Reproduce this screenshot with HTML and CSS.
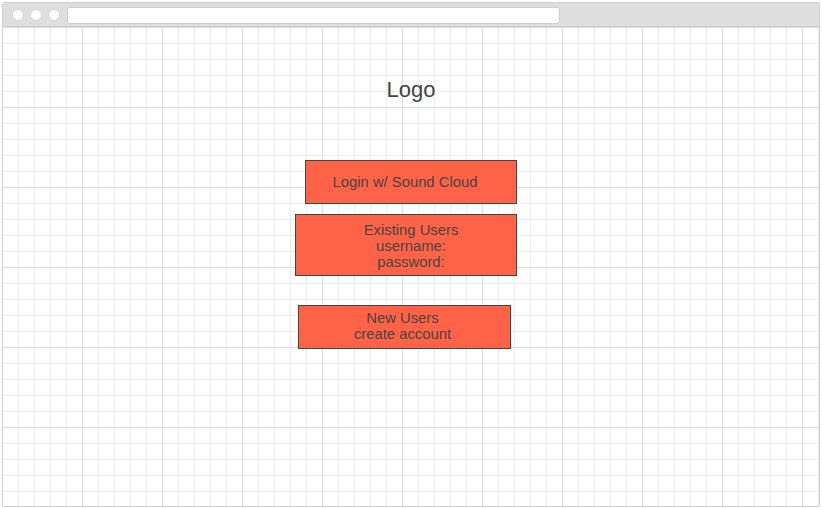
FILE: index.html
```html
<!DOCTYPE html>
<html>
<head>
<meta charset="utf-8">
<link rel="stylesheet" href="styles.css">
</head>
<body>
<div class="window">
  <div class="toolbar">
    <div class="dots">
      <span class="dot"></span><span class="dot"></span><span class="dot"></span>
    </div>
    <div class="url"></div>
  </div>
  <div class="canvas">
    <div class="logo">Logo</div>
    <div class="box box-login">Login w/ Sound Cloud</div>
    <div class="box box-existing">Existing Users<br>username:<br>password:</div>
    <div class="box box-new">New Users<br>create account</div>
  </div>
</div>
</body>
</html>
```
FILE: styles.css
```css
html, body {
  margin: 0;
  padding: 0;
  background: #ffffff;
}
body {
  padding: 2px;
  font-family: "Liberation Sans", Arial, sans-serif;
}
.window {
  width: 818px;
  height: 505px;
  box-sizing: border-box;
  border: 1px solid #cfcfcf;
  border-radius: 2px;
  display: flex;
  flex-direction: column;
  overflow: hidden;
}
.toolbar {
  height: 24px;
  box-sizing: border-box;
  background: #dedede;
  border-bottom: 1px solid #cdcdcd;
  display: flex;
  align-items: center;
  flex: none;
}
.dots {
  display: flex;
  gap: 6px;
  margin-left: 9px;
}
.dot {
  width: 12px;
  height: 12px;
  box-sizing: border-box;
  border-radius: 50%;
  background: #ffffff;
  border: 1px solid #d4d4d4;
}
.url {
  width: 493px;
  height: 17px;
  box-sizing: border-box;
  margin-left: 7px;
  margin-top: 1px;
  background: #ffffff;
  border: 1px solid #cccccc;
  border-radius: 3px;
}
.canvas {
  flex: 1;
  display: flex;
  flex-direction: column;
  background-color: #ffffff;
  background-image:
    linear-gradient(to right, #dcdcdc 1px, transparent 1px),
    linear-gradient(to bottom, #dcdcdc 1px, transparent 1px),
    linear-gradient(to right, #ececec 1px, transparent 1px),
    linear-gradient(to bottom, #ececec 1px, transparent 1px);
  background-size: 80px 80px, 80px 80px, 16px 16px, 16px 16px;
  background-position: -1px 0, -1px 0, -1px 0, -1px 0;
}
.logo {
  margin-top: 50px;
  height: 26px;
  line-height: 26px;
  text-align: center;
  font-size: 22px;
  color: #444444;
}
.box {
  box-sizing: border-box;
  background: #ff6347;
  border: 1px solid #444444;
  color: #444444;
  font-size: 14.8px;
  line-height: 16px;
  text-align: center;
  display: flex;
  align-items: center;
  justify-content: center;
}
.box-login {
  margin-top: 57px;
  margin-left: 302px;
  width: 212px;
  height: 44px;
  padding-right: 12px;
}
.box-existing {
  margin-top: 10px;
  margin-left: 292px;
  width: 222px;
  height: 62px;
  padding-left: 10px;
  padding-top: 2px;
}
.box-new {
  margin-top: 29px;
  margin-left: 295px;
  width: 213px;
  height: 44px;
  padding-right: 4px;
  padding-bottom: 2px;
}
```
